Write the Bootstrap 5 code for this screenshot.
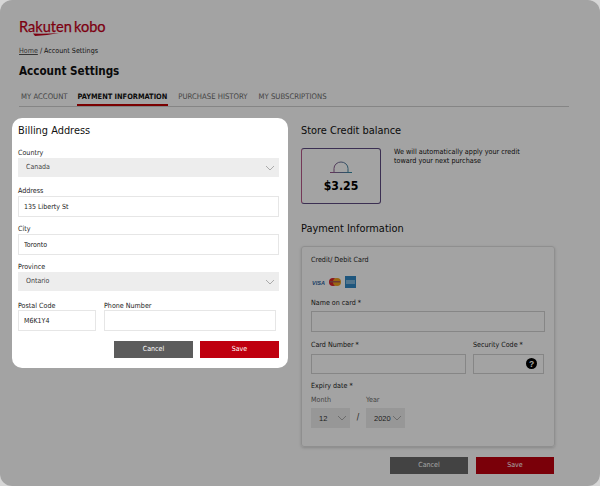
<!DOCTYPE html>
<html lang="en"><head><meta charset="utf-8"><title>Account Settings</title>
<link href="https://cdn.jsdelivr.net/npm/bootstrap@5.3.0/dist/css/bootstrap.min.css" rel="stylesheet">
<style>
html,body{margin:0;height:486px;overflow:hidden;background:#fff}
body{font-family:"DejaVu Sans Condensed","DejaVu Sans",sans-serif;color:#1a1a1a;font-size:7px}
.shell{position:relative;width:600px;height:486px;padding:0 0 0 19px;background:#d6d6d6;overflow:hidden}
.shell-bg{position:absolute;inset:0;background:#fff;border-radius:12px;z-index:0}
.veil{position:absolute;inset:0;background:rgba(0,0,0,.36);border-radius:12px;z-index:1}
.content{position:static}
.content>*{position:relative}
.brand{padding-top:18px;box-sizing:content-box;height:9px;display:block;width:90px;font-family:Lato,sans-serif;font-size:14.600px;line-height:17px;color:#c4001a;-webkit-text-stroke:.25px #c4001a;white-space:nowrap}
.brand span{margin-left:2px}
.brand svg{position:absolute;left:14px;top:33px}
.crumbs{margin-top:18px;height:10px;line-height:10px;padding-top:1px;box-sizing:border-box;font-size:7.100px;color:#222}
.crumbs a{color:#555}
.pagetitle{margin:8px 0 0;font-size:11.600px;line-height:16px;font-weight:700;color:#111}
.tabsrow{width:550px;height:28px;margin:0;border-bottom:1px solid #d0d0d0;display:flex;gap:8px;list-style:none;padding:0}
.tabsrow a{display:block;padding:11px 1px 0 2px;height:27px;line-height:14px;font-size:7.700px;color:#6a6a6a;text-decoration:none}
.tabsrow a.on{font-weight:700;font-size:7.400px;color:#111;border-bottom:2px solid #bf0000;padding-left:1px}
.columns{display:flex;margin-top:11px;margin-left:-7px}
.billing{position:relative;z-index:2;width:276px;height:250px;flex:none;background:#fff;border-radius:10px;padding:5px 9px 0 6px}
.sectitle{font-size:10.900px;line-height:14px;height:14px;padding-top:1px;box-sizing:border-box;margin:0;color:#111;font-weight:400}
.fieldlabel{display:block;height:10px;padding-top:1px;box-sizing:border-box;font-size:7.100px;line-height:10px;margin:0;color:#222}
.billing .fieldlabel{margin-top:6px;margin-bottom:1px}
.billing .sectitle+.fieldlabel{margin-top:10px}
.billing .gapa{margin-top:8px}
.greysel.form-select{height:19px;min-height:0;padding:0 8px;font-size:7px;line-height:19px;border:0;border-radius:0;background-color:#ededed;color:#444;background-position:right 4px center;background-size:10px 10px;background-image:url("data:image/svg+xml,%3csvg xmlns='http://www.w3.org/2000/svg' viewBox='0 0 10 10'%3e%3cpath fill='none' stroke='%23aaa' d='M1 3l4 4 4-4'/%3e%3c/svg%3e")}
.textbox.form-control{height:21px;min-height:0;padding:0 5px;font-size:7px;line-height:19px;border:1px solid #e6e6e6;border-radius:0;color:#222;background:#fff}
.pairrow{display:flex;gap:8px}
.billing .pairrow .fieldlabel{margin:0}
.billing .pairrow{margin-top:9px}
.actions{display:flex;justify-content:flex-end;gap:7px;margin-top:10px}
.act.btn{width:79px;height:17px;padding:0;font-size:7px;line-height:17px;border:0;border-radius:0;color:#fff}
.act.dark{background:#5c5c5c}
.act.red{background:#bf000f}
.side .act.dark{background:#6a6a6a}
.side{width:254px;margin-left:13px;padding-top:5px}
.creditrow{display:flex;margin-top:11px;gap:13px}
.creditbox{width:80px;height:56px;border:1.500px solid #5d4a80;border-radius:3px;display:flex;flex-direction:column;align-items:center;padding-top:12px;border-left-color:#b65a8a}
.creditbox b{font-size:12.200px;line-height:15px;font-weight:700;color:#000;margin-top:6px}
.creditnote{font-size:7.200px;line-height:8.500px;color:#111}
.pay-head{margin-top:17px}
.paybox{margin-top:11px;height:201px;border:1px solid #e0e0e0;border-radius:3px;padding:7px 9px;box-shadow:0 1px 3px rgba(0,0,0,.18)}
.cardlogos{display:flex;gap:4px;align-items:center;margin:12px 0 9px 1px;height:12px}
.paybox .textbox.form-control{border-color:#d2d2d2}
.paybox .name-label{margin-bottom:4px}
.paybox .num-row{margin-top:7px;gap:7px}
.paybox .num-row .fieldlabel{margin-bottom:5px}
.paybox .num-row .textbox.form-control{height:20px}
.expiry-label.fieldlabel{margin-top:6px}
.smonth{font-size:7.100px;line-height:10px;height:10px;padding-top:1px;box-sizing:border-box;color:#6a6a6a;margin-top:4px;display:flex}
.smonth div:first-child{width:55px}
.expiry{display:flex;align-items:center;margin-top:4px}
.expiry .greysel.form-select{width:39px;height:20px;padding:0 8px;color:#333;font-family:"Liberation Sans",sans-serif;font-size:7.500px;background-position:right 3px center}
.expiry span{width:16px;text-align:center;font-size:8px}
.sideact{display:flex;justify-content:flex-end;gap:8px;margin-top:10px;width:253px}
.sideact .act.btn{width:78px}
.cvv-wrap{position:relative}
.cvv-wrap svg{position:absolute;right:7px;top:4px}
</style></head><body>
<div class="shell">
 <div class="shell-bg"></div>
 <div class="veil"></div>
 <div class="content">
  <div class="brand">Rakuten<span>kobo</span><svg width="26" height="3" viewBox="0 0 26 3"><path d="M0 .5 Q12 1 26 0 Q14 2.500 2 3Z" fill="#c4001a"/></svg></div>
  <div class="crumbs"><a href="#">Home</a> / Account Settings</div>
  <h1 class="pagetitle">Account Settings</h1>
  <ul class="tabsrow">
   <li><a href="#">MY ACCOUNT</a></li><li><a class="on" href="#">PAYMENT INFORMATION</a></li><li><a href="#">PURCHASE HISTORY</a></li><li><a href="#">MY SUBSCRIPTIONS</a></li>
  </ul>
  <div class="columns">
   <form class="billing">
    <h2 class="sectitle">Billing Address</h2>
    <label class="fieldlabel">Country</label>
    <select class="form-select greysel"><option>Canada</option></select>
    <label class="fieldlabel gapa">Address</label>
    <input class="form-control textbox" value="135 Liberty St">
    <label class="fieldlabel">City</label>
    <input class="form-control textbox" value="Toronto">
    <label class="fieldlabel">Province</label>
    <select class="form-select greysel"><option>Ontario</option></select>
    <div class="pairrow">
     <div style="width:78px"><label class="fieldlabel">Postal Code</label><input class="form-control textbox" value="M6K1Y4"></div>
     <div style="width:172px"><label class="fieldlabel">Phone Number</label><input class="form-control textbox"></div>
    </div>
    <div class="actions"><button type="button" class="btn act dark">Cancel</button><button type="button" class="btn act red">Save</button></div>
   </form>
   <div class="side">
    <h2 class="sectitle">Store Credit balance</h2>
    <div class="creditrow">
     <div class="creditbox"><svg width="22" height="12" viewBox="0 0 22 12"><defs><linearGradient id="arcg" gradientUnits="userSpaceOnUse" x1="0" y1="0" x2="22" y2="0"><stop offset="0" stop-color="#a0528a"/><stop offset="1" stop-color="#2f8fa8"/></linearGradient></defs><path d="M0 11.500h22" stroke="url(#arcg)" stroke-width="1" fill="none"/><path d="M4 11.500V7.500a7 6.500 0 0 1 14 0v4" fill="none" stroke="url(#arcg)" stroke-width="1"/></svg><b>$3.25</b></div>
     <div class="creditnote">We will automatically apply your credit<br>toward your next purchase</div>
    </div>
    <h2 class="sectitle pay-head">Payment Information</h2>
    <div class="paybox">
     <div class="fieldlabel">Credit/ Debit Card</div>
     <div class="cardlogos">
      <svg width="13" height="6" viewBox="0 0 13 6"><text x="0" y="5.500" font-family="Liberation Sans" font-size="5.500" font-weight="700" font-style="italic" fill="#2a5f9e" textLength="13">VISA</text></svg>
      <svg width="12" height="8" viewBox="0 0 12 8"><circle cx="4" cy="4" r="4" fill="#d9222a"/><circle cx="8" cy="4" r="4" fill="#f0a11c"/><rect x="1" y="3" width="10" height="1.500" fill="#a85a50"/></svg>
      <svg width="11" height="12" viewBox="0 0 11 12"><rect width="11" height="12" fill="#2f87c4"/><path d="M1 5h9M1 7h9" stroke="#cfe6f4" stroke-width="1"/></svg>
     </div>
     <label class="fieldlabel name-label">Name on card *</label>
     <input class="form-control textbox">
     <div class="pairrow num-row">
      <div style="width:155px"><label class="fieldlabel">Card Number *</label><input class="form-control textbox"></div>
      <div style="width:71px"><label class="fieldlabel">Security Code *</label><div class="cvv-wrap"><input class="form-control textbox"><svg width="11" height="11" viewBox="0 0 11 11"><circle cx="5.500" cy="5.500" r="5.500" fill="#000"/><text x="5.500" y="8.500" text-anchor="middle" font-family="Liberation Sans" font-size="8.500" font-weight="700" fill="#fff">?</text></svg></div></div>
     </div>
     <label class="fieldlabel expiry-label">Expiry date *</label>
     <div class="smonth"><div>Month</div><div>Year</div></div>
     <div class="expiry"><select class="form-select greysel"><option>12</option></select><span>/</span><select class="form-select greysel"><option>2020</option></select></div>
    </div>
    <div class="sideact"><button type="button" class="btn act dark">Cancel</button><button type="button" class="btn act red">Save</button></div>
   </div>
  </div>
 </div>
</div>
<script src="https://cdn.jsdelivr.net/npm/bootstrap@5.3.0/dist/js/bootstrap.bundle.min.js"></script>
</body></html>
